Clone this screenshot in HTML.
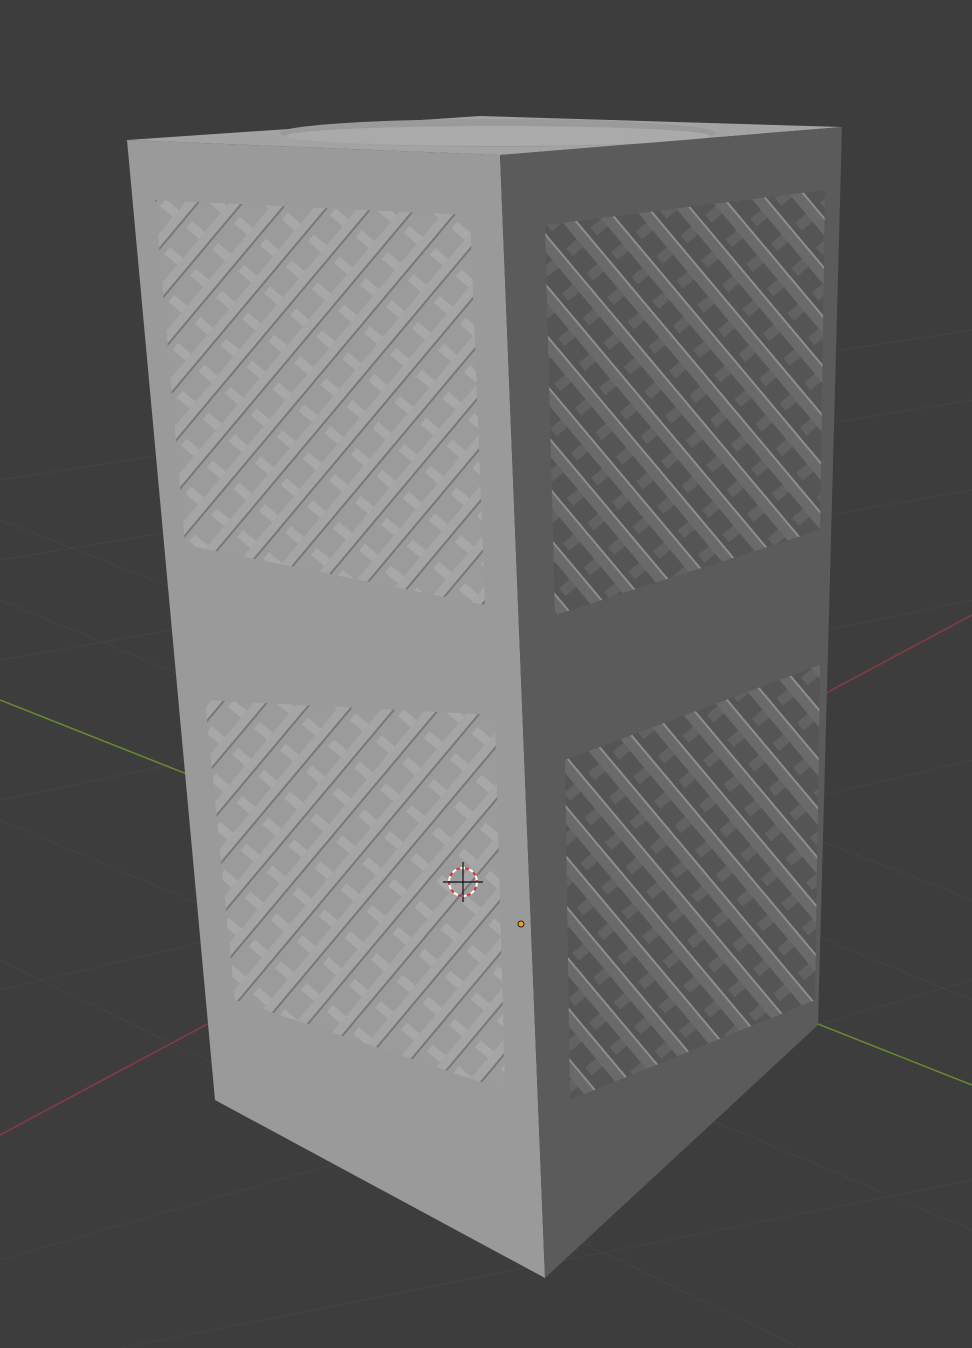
<!DOCTYPE html>
<html><head><style>html,body{margin:0;padding:0;background:#3d3d3d;}svg{display:block}</style></head>
<body>
<svg width="972" height="1348" viewBox="0 0 972 1348" xmlns="http://www.w3.org/2000/svg">
<defs>
<pattern id="pl" width="34" height="34" patternUnits="userSpaceOnUse" patternTransform="rotate(40)">
<rect width="34" height="34" fill="#9b9b9b"/>
<rect x="0" y="0" width="9" height="34" fill="#a6a6a6"/>
<rect x="9" y="0" width="2" height="34" fill="#747474"/>
<rect x="17" y="12" width="17" height="9" fill="#a9a9a9"/>
</pattern>
<pattern id="pr" width="32" height="32" patternUnits="userSpaceOnUse" patternTransform="rotate(-40)">
<rect width="32" height="32" fill="#555"/>
<rect x="0" y="0" width="10" height="32" fill="#6a6a6a"/>
<rect x="10" y="0" width="2" height="32" fill="#8e8e8e"/>
<rect x="18" y="10" width="14" height="10" fill="#626262"/>
</pattern>
</defs>
<rect width="972" height="1348" fill="#3d3d3d"/>
<g stroke="#444" stroke-width="1">
<line x1="0" y1="480" x2="972" y2="330"/>
<line x1="0" y1="560" x2="972" y2="400"/>
<line x1="0" y1="660" x2="972" y2="490"/>
<line x1="0" y1="800" x2="972" y2="600"/>
<line x1="0" y1="990" x2="972" y2="760"/>
<line x1="0" y1="1260" x2="972" y2="980"/>
<line x1="0" y1="520" x2="972" y2="900"/>
<line x1="0" y1="600" x2="972" y2="1000"/>
<line x1="0" y1="820" x2="972" y2="1230"/>
<line x1="0" y1="960" x2="800" y2="1348"/>
<line x1="120" y1="1348" x2="972" y2="1180"/>
</g>
<line x1="0" y1="1135" x2="972" y2="615" stroke="#8a3a44" stroke-width="1.5"/>
<line x1="0" y1="700" x2="972" y2="1085" stroke="#6a8a2e" stroke-width="1.5"/>
<polygon points="127,140 480,116 842,127 500,155" fill="#a3a3a3"/>
<ellipse cx="498" cy="133" rx="218" ry="14" fill="#9a9a9a"/>
<ellipse cx="498" cy="136" rx="212" ry="10" fill="#aaaaaa"/>
<polygon points="127,140 500,155 545,1278 215,1100" fill="#9a9a9a"/>
<polygon points="500,155 842,127 818,1025 545,1278" fill="#5b5b5b"/>
<polygon points="155,200 470,215 485,605 185,545" fill="url(#pl)" opacity="0.9"/>
<polygon points="205,700 495,715 505,1090 235,1000" fill="url(#pl)" opacity="0.9"/>
<polygon points="545,225 825,190 820,530 555,615" fill="url(#pr)"/>
<polygon points="565,760 820,665 815,1000 570,1100" fill="url(#pr)"/>
<circle cx="463" cy="882" r="14" fill="none" stroke="#fff" stroke-width="2" stroke-dasharray="5 4"/>
<circle cx="463" cy="882" r="14" fill="none" stroke="#d33" stroke-width="2" stroke-dasharray="4 5" stroke-dashoffset="4"/>
<g stroke="#111" stroke-width="1.2"><line x1="443" y1="882" x2="483" y2="882"/><line x1="463" y1="862" x2="463" y2="902"/></g>
<circle cx="521" cy="924" r="3" fill="#f0a020" stroke="#222"/>
</svg>
</body></html>
